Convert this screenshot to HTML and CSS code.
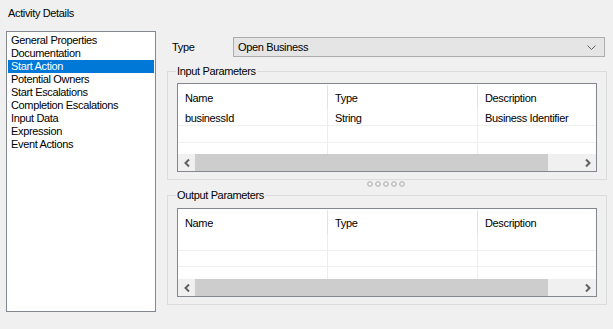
FILE: index.html
```html
<!DOCTYPE html>
<html lang="en">
<head>
    <meta charset="UTF-8">
    <title>Activity Details</title>
    <link rel="stylesheet" href="styles.css">
</head>
<body>
    <div class="title">Activity Details</div>

    <div class="main">

        <!-- Left: list of pages -->
        <div class="listbox">
            <div class="item">General Properties</div>
            <div class="item">Documentation</div>
            <div class="item selected">Start Action</div>
            <div class="item">Potential Owners</div>
            <div class="item">Start Escalations</div>
            <div class="item">Completion Escalations</div>
            <div class="item">Input Data</div>
            <div class="item">Expression</div>
            <div class="item">Event Actions</div>
        </div>

        <!-- Right: start action details -->
        <div class="panel">
            <div class="type-row">
                <span class="type-label">Type</span>
                <div class="combo">
                    <span>Open Business</span>
                    <svg class="combo-arrow" width="9" height="5" viewBox="0 0 9 5"><path d="M0.5 0.5 L4.5 4.5 L8.5 0.5" fill="none" stroke="#606060" stroke-width="1"/></svg>
                </div>
            </div>

            <fieldset class="group">
                <legend>Input Parameters</legend>
                <div class="grid">
                    <div class="row head">
                        <div class="cell">Name</div>
                        <div class="cell">Type</div>
                        <div class="cell">Description</div>
                    </div>
                    <div class="row">
                        <div class="cell">businessId</div>
                        <div class="cell">String</div>
                        <div class="cell">Business Identifier</div>
                    </div>
                    <div class="row">
                        <div class="cell"></div>
                        <div class="cell"></div>
                        <div class="cell"></div>
                    </div>
                    <div class="row last">
                        <div class="cell"></div>
                        <div class="cell"></div>
                        <div class="cell"></div>
                    </div>
                    <div class="hscroll">
                        <div class="arrow"><svg width="6" height="8" viewBox="0 0 6 8"><path d="M5 0.5 L1.5 4 L5 7.5" fill="none" stroke="#606060" stroke-width="2"/></svg></div>
                        <div class="thumb"></div>
                        <div class="track"></div>
                        <div class="arrow"><svg width="6" height="8" viewBox="0 0 6 8"><path d="M1 0.5 L4.5 4 L1 7.5" fill="none" stroke="#606060" stroke-width="2"/></svg></div>
                    </div>
                </div>
            </fieldset>

            <div class="splitter">
                <svg width="40" height="6" viewBox="0 0 40 6">
                    <circle cx="3" cy="3" r="2.3" fill="none" stroke="#a8a8a8" stroke-width="1"/>
                    <circle cx="11" cy="3" r="2.3" fill="none" stroke="#a8a8a8" stroke-width="1"/>
                    <circle cx="19" cy="3" r="2.3" fill="none" stroke="#a8a8a8" stroke-width="1"/>
                    <circle cx="27" cy="3" r="2.3" fill="none" stroke="#a8a8a8" stroke-width="1"/>
                    <circle cx="35" cy="3" r="2.3" fill="none" stroke="#a8a8a8" stroke-width="1"/>
                </svg>
            </div>

            <fieldset class="group output">
                <legend>Output Parameters</legend>
                <div class="grid">
                    <div class="row head">
                        <div class="cell">Name</div>
                        <div class="cell">Type</div>
                        <div class="cell">Description</div>
                    </div>
                    <div class="row">
                        <div class="cell"></div>
                        <div class="cell"></div>
                        <div class="cell"></div>
                    </div>
                    <div class="row">
                        <div class="cell"></div>
                        <div class="cell"></div>
                        <div class="cell"></div>
                    </div>
                    <div class="row last">
                        <div class="cell"></div>
                        <div class="cell"></div>
                        <div class="cell"></div>
                    </div>
                    <div class="hscroll">
                        <div class="arrow"><svg width="6" height="8" viewBox="0 0 6 8"><path d="M5 0.5 L1.5 4 L5 7.5" fill="none" stroke="#606060" stroke-width="2"/></svg></div>
                        <div class="thumb"></div>
                        <div class="track"></div>
                        <div class="arrow"><svg width="6" height="8" viewBox="0 0 6 8"><path d="M1 0.5 L4.5 4 L1 7.5" fill="none" stroke="#606060" stroke-width="2"/></svg></div>
                    </div>
                </div>
            </fieldset>
        </div>
    </div>
</body>
</html>
```

FILE: styles.css
```css
* {
  box-sizing: border-box;
  margin: 0;
  padding: 0;
}

body {
  background-color: #f0f0f0;
  font-family: "Liberation Sans", Arial, sans-serif;
  font-size: 11px;
  letter-spacing: -0.35px;
  color: #000;
  width: 613px;
  height: 329px;
  overflow: hidden;
}

.title {
  padding: 7px 0 0 8px;
  height: 31px;
  line-height: 13px;
}

.main {
  display: flex;
}

/* list of pages */
.listbox {
  margin-left: 6px;
  width: 150px;
  height: 281px;
  background-color: #fff;
  border: 1px solid #828790;
  padding: 2px 1px;
}

.item {
  height: 13px;
  line-height: 13px;
  padding-left: 3px;
}

.item.selected {
  background-color: #0078d7;
  color: #fff;
}

/* right side */
.panel {
  margin-left: 11px;
  width: 439px;
}

.type-row {
  display: flex;
  align-items: center;
  margin-top: 6px;
  height: 20px;
}

.type-label {
  width: 66px;
  padding-left: 5px;
}

.combo {
  width: 372px;
  height: 20px;
  background-color: #e5e5e5;
  border: 1px solid #adadad;
  display: flex;
  align-items: center;
  justify-content: space-between;
  padding: 0 8px 0 4px;
}

.combo-arrow {
  display: block;
}

.group {
  border: 1px solid #dcdcdc;
  border-radius: 0;
  padding: 5px 9px 7px 9px;
}

.group.output {
  padding-top: 6px;
}

.type-row + .group {
  margin-top: 8px;
}

.group legend {
  padding: 0 1px;
  margin-left: -1px;
  line-height: 13px;
}

.grid {
  width: 420px;
  height: 89px;
  border: 1px solid #828790;
  background-color: #fff;
  display: flex;
  flex-direction: column;
}

.row {
  display: flex;
  height: 17px;
  border-bottom: 1px solid #f0f0f0;
}

.row.head {
  height: 25px;
  border-bottom: none;
}

.row.last {
  height: 12px;
  border-bottom: none;
}

.cell {
  width: 150px;
  padding: 1px 0 0 7px;
  line-height: 16px;
  border-right: 1px solid #e8eef7;
}

.row.head .cell {
  line-height: 24px;
  border-right-color: #e3e3e3;
  margin-top: 1px;
  padding-top: 1px;
}

.cell:last-child {
  flex: 1;
  border-right: none;
}

.hscroll {
  display: flex;
  height: 17px;
  background-color: #f0f0f0;
}

.hscroll .arrow {
  width: 17px;
  display: flex;
  align-items: center;
  justify-content: center;
}

.hscroll .thumb {
  width: 353px;
  background-color: #cdcdcd;
}

.hscroll .track {
  flex: 1;
}

.splitter {
  height: 9px;
  display: flex;
  justify-content: center;
  align-items: flex-start;
  padding-top: 1px;
}

.splitter svg {
  display: block;
}
```
